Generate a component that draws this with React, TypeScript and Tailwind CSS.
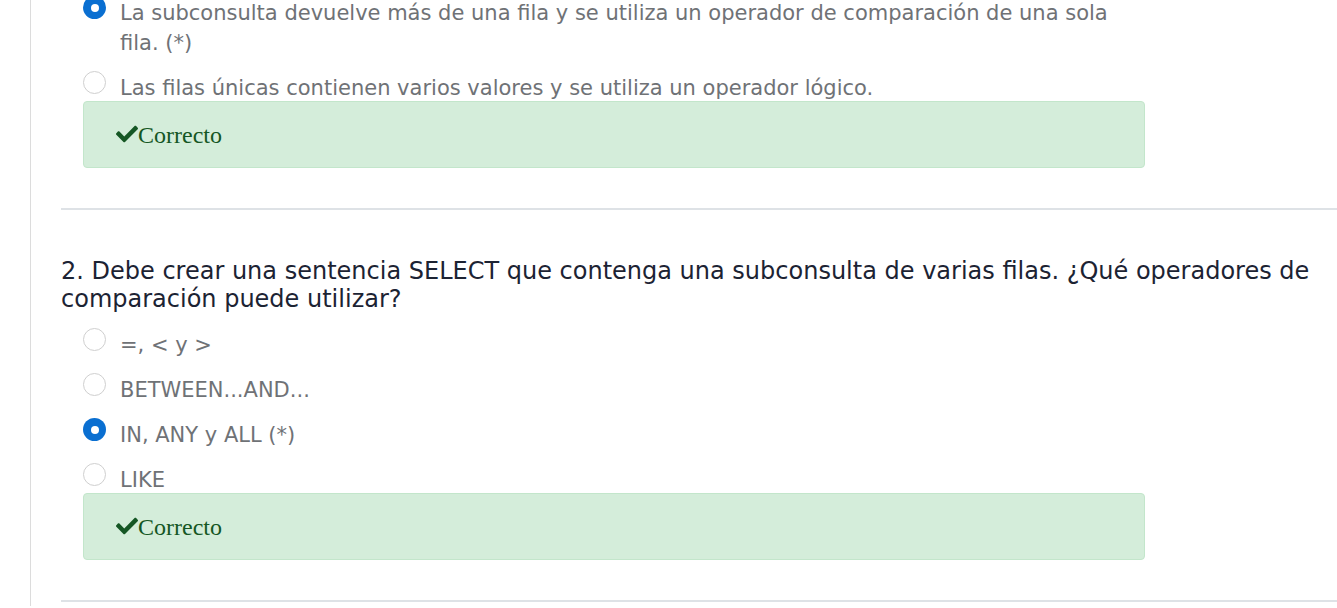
import React from 'react';
import { FaCheck } from 'react-icons/fa';

interface Option {
  text: string;
  checked?: boolean;
}

interface Question {
  title?: string;
  options: Option[];
}

const questions: Question[] = [
  {
    options: [
      { text: 'La subconsulta devuelve más de una fila y se utiliza un operador de comparación de una sola fila. (*)', checked: true },
      { text: 'Las filas únicas contienen varios valores y se utiliza un operador lógico.' },
    ],
  },
  {
    title: '2. Debe crear una sentencia SELECT que contenga una subconsulta de varias filas. ¿Qué operadores de comparación puede utilizar?',
    options: [
      { text: '=, < y >' },
      { text: 'BETWEEN...AND...' },
      { text: 'IN, ANY y ALL (*)', checked: true },
      { text: 'LIKE' },
    ],
  },
];

const Radio = ({ checked }: { checked?: boolean }) =>
  checked ? (
    <span className="mt-[-2px] flex h-[23px] w-[23px] shrink-0 items-center justify-center rounded-full bg-[#0a6fd1]">
      <span className="h-[8px] w-[8px] rounded-full bg-white" />
    </span>
  ) : (
    <span className="mt-[-2px] h-[23px] w-[23px] shrink-0 rounded-full border-[1.5px] border-[#cfcfcf] bg-white" />
  );

const QuestionBlock = ({ q }: { q: Question }) => (
  <div>
    {q.title && (
      <h3 className="mb-[17px] text-[24px] leading-[28px] text-[#1c2333]">{q.title}</h3>
    )}
    <div className="flex flex-col gap-[15px] pl-[22px]">
      {q.options.map((o, i) => (
        <div key={i} className="flex items-start gap-[14px] pr-[192px]">
          <Radio checked={o.checked} />
          <span className="text-[21px] leading-[30px] text-[#6f7276]">{o.text}</span>
        </div>
      ))}
    </div>
    <div className="mt-[-2px] ml-[22px] mr-[192px] flex h-[67px] items-center rounded-[4px] border border-[#c3e6cb] bg-[#d4edda] pl-[32px] font-['Liberation_Serif',serif] text-[24px] text-[#155724]">
      <FaCheck size={22} className="mb-[1px]" />
      <span>Correcto</span>
    </div>
  </div>
);

export default function App() {
  return (
    <div className="h-[608px] overflow-hidden bg-white font-['DejaVu_Sans',Verdana,sans-serif]">
      <div className="ml-[30px] h-full border-l border-[#dcdcdc] pl-[30px]">
        <div className="mt-[-2px] flex flex-col">
          {questions.map((q, i) => (
            <div key={i} className="flex flex-col">
              <QuestionBlock q={q} />
              <div className="mt-[40px] mb-[47px] h-[2px] bg-[#dee2e6]" />
            </div>
          ))}
        </div>
      </div>
    </div>
  );
}
